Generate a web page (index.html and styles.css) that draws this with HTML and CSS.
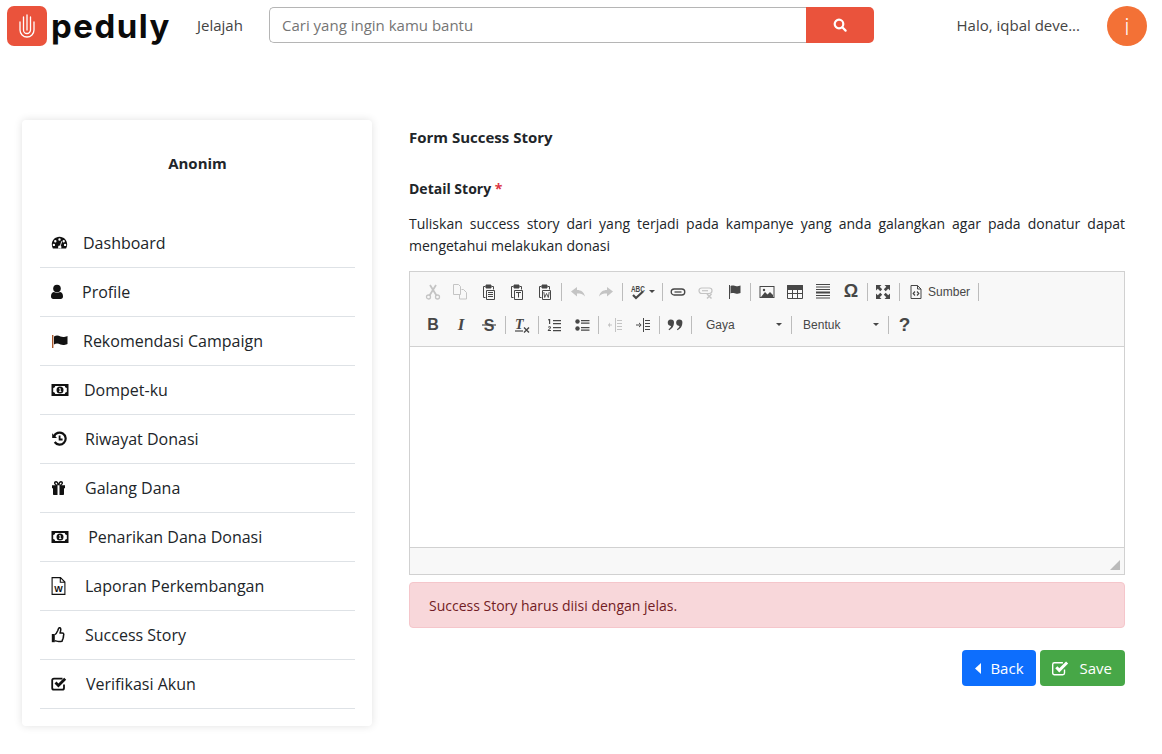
FILE: index.html
```html
<!DOCTYPE html>
<html lang="en">
<head>
    <meta charset="UTF-8">
    <meta name="viewport" content="width=device-width, initial-scale=1.0">
    <title>Form Success Story</title>
    <link rel="stylesheet" href="styles.css">
</head>
<body>
    <header class="topbar">
      <a class="logo-mark" href="#">
        <svg width="24" height="26" viewBox="0 0 24 26" fill="none" stroke="#fff" stroke-width="1.300" stroke-linecap="round">
          <path d="M5 9v8a7 7 0 0 0 14 0V9"/>
          <path d="M8.500 4v13a3.500 3.500 0 0 0 7 0V4"/>
          <path d="M12 2v15"/>
        </svg>
      </a>
      <span class="logo-text">peduly</span>
      <a class="nav-link" href="#">Jelajah</a>
      <form class="search">
        <input class="search-input" type="text" placeholder="Cari yang ingin kamu bantu">
        <button class="search-btn" type="button">
          <svg width="14" height="14" viewBox="0 0 14 14" fill="none" stroke="#fff" stroke-width="2.200" stroke-linecap="round"><circle cx="6" cy="6" r="4.300"/><path d="M9.300 9.300L12.600 12.600"/></svg>
        </button>
      </form>
      <span class="greeting">Halo, iqbal deve...</span>
      <span class="avatar">i</span>
    </header>

    <div class="page">
      <aside class="sidebar">
        <h2 class="sidebar-name">Anonim</h2>
        <ul class="menu">
          <li class="menu-item">
            <svg width="17" height="16" viewBox="0 0 17 16"><path fill="#111" fill-rule="evenodd" d="M8.500 1.800C4 1.800 .8 5.400 .8 9.500c0 1.500.4 2.800 1.100 4h13.200c.7-1.200 1.100-2.500 1.100-4 0-4.100-3.200-7.700-7.700-7.700zM8.500 3.300a1.200 1.200 0 1 1 0 2.400 1.200 1.200 0 0 1 0-2.400zM4.300 5a1.200 1.200 0 1 1 0 2.400 1.200 1.200 0 0 1 0-2.400zM12.700 5a1.200 1.200 0 1 1 0 2.400 1.200 1.200 0 0 1 0-2.400zM2.900 8.700a1.200 1.200 0 1 1 0 2.400 1.200 1.200 0 0 1 0-2.400zM14.100 8.700a1.200 1.200 0 1 1 0 2.400 1.200 1.200 0 0 1 0-2.400zM10.200 6.200l.9.3-1.300 4.300a1.700 1.700 0 1 1-2.700 1 1.700 1.700 0 0 1 2-1.200z"/></svg>
            <span>Dashboard</span>
          </li>
          <li class="menu-item">
            <svg width="16" height="16" viewBox="0 0 16 16"><circle cx="6" cy="4.500" r="3.800" fill="#111"/><path fill="#111" d="M0 12.500c0-2.600.9-4.200 2.800-4.500 1.800 1.100 4.600 1.100 6.400 0 1.900.3 2.800 1.900 2.800 4.500 0 1.500-.9 2.500-2.300 2.500H2.300C.9 15 0 14 0 12.500z"/></svg>
            <span>Profile</span>
          </li>
          <li class="menu-item">
            <svg width="17" height="16" viewBox="0 0 17 16"><rect x="1" y="2" width="1.400" height="13" fill="#a8562a"/><path fill="#111" d="M3 3.500c2.300-1.500 4.500-1 6.500 0 2.300.8 4 .6 7-.5v8c-3 1.100-4.700 1.300-7 .5-2-1-4.200-1.500-6.500 0z"/></svg>
            <span>Rekomendasi Campaign</span>
          </li>
          <li class="menu-item">
            <svg width="18" height="16" viewBox="0 0 18 16"><use href="#ic-money"/></svg>
            <span>Dompet-ku</span>
          </li>
          <li class="menu-item">
            <svg width="19" height="16" viewBox="0 0 19 16"><path fill="none" stroke="#111" stroke-width="2.200" d="M3 5.500A6 6 0 1 1 3.700 11"/><path fill="#111" d="M1.200 2.200v4.800H6z"/><path fill="none" stroke="#111" stroke-width="1.800" d="M8.600 4.500v4h3"/></svg>
            <span>Riwayat Donasi</span>
          </li>
          <li class="menu-item">
            <svg width="19" height="16" viewBox="0 0 19 16"><path fill="#111" fill-rule="evenodd" d="M1 5.200h3.700C3.700 4.700 3 3.800 3 2.900 3 1.700 3.900 1 5 1c1.300 0 2.200 1.100 2.500 2.500C7.800 2.100 8.700 1 10 1c1.100 0 2 .7 2 1.900 0 .9-.7 1.800-1.700 2.300H14v3.100h-1v5.700c0 .6-.4 1-1 1H3c-.6 0-1-.4-1-1V8.300H1zM5 2.500c-.4 0-.6.2-.6.5 0 .6.6 1.200 1.100 1.400h.9C6.200 3.300 5.700 2.500 5 2.500zM10 2.500c-.7 0-1.200.8-1.400 1.900h.9c.5-.2 1.100-.8 1.100-1.400 0-.3-.2-.5-.6-.5zM6.500 5.200V15h2V5.200z"/></svg>
            <span>Galang Dana</span>
          </li>
          <li class="menu-item">
            <svg width="18" height="16" viewBox="0 0 18 16"><use href="#ic-money"/></svg>
            <span>&nbsp;Penarikan Dana Donasi</span>
          </li>
          <li class="menu-item">
            <svg class="file-icon" width="19" height="18" viewBox="0 0 19 18"><path fill="none" stroke="#111" stroke-width="1.100" d="M1.100 .6h8.400l4.400 4.400v12.400H1.100zM9.300 .6v4.600h4.600"/><text x="7.500" y="14.500" class="file-w">W</text></svg>
            <span>Laporan Perkembangan</span>
          </li>
          <li class="menu-item">
            <svg width="19" height="16" viewBox="0 0 19 16"><path fill="#111" d="M.8 7h3v8.200h-3z"/><path fill="none" stroke="#111" stroke-width="1.500" d="M3.800 7.600c1.400-.4 2.200-2.200 3-4.100.4-1.100.6-2.800 1.700-2.800 1.500 0 1.500 2 .9 3.900-.2.500-.3 1-.3 1.400h2.200c1 0 1.500.7 1.500 1.600 0 .8-.4 1.200-.5 1.500.3.500.2 1.300-.2 1.800.1.700-.1 1.400-.6 1.800 0 1.200-.5 1.800-1.500 1.800H7.600c-1.500 0-2.300-.8-3.800-.8"/></svg>
            <span>Success Story</span>
          </li>
          <li class="menu-item">
            <svg width="20" height="16" viewBox="0 0 20 16"><path fill="none" stroke="#111" stroke-width="1.800" d="M13 8.500v3.500c0 1-.7 1.700-1.700 1.700H3c-1 0-1.800-.7-1.800-1.700V4.300C1.200 3.300 2 2.600 3 2.600h8.500"/><path fill="none" stroke="#111" stroke-width="2.800" d="M4.500 6.600l2.900 2.900 6.800-6.800"/></svg>
            <span>Verifikasi Akun</span>
          </li>
        </ul>
      </aside>

      <main class="content">
        <h1 class="form-title">Form Success Story</h1>
        <label class="field-label">Detail Story <span class="required">*</span></label>
        <p class="field-help">Tuliskan success story dari yang terjadi pada kampanye yang anda galangkan agar pada donatur dapat mengetahui melakukan donasi</p>

        <div class="editor">
          <div class="editor-toolbar">
            <div class="tool-row">
              <span class="tool off"><svg viewBox="0 0 16 16" fill="none" stroke="currentColor" stroke-width="1.300"><circle cx="3.500" cy="13" r="2"/><circle cx="12.500" cy="13" r="2"/><path stroke-width="1.800" d="M4.500 11.500L11 1M11.500 11.500L5 1"/></svg></span>
              <span class="tool off"><svg viewBox="0 0 16 16" fill="none" stroke="currentColor"><path d="M.5 .5h5l2 2v8h-7zM8.500 5.500h2l3 3v6.500h-7v-4"/></svg></span>
              <span class="tool"><svg viewBox="0 0 16 16" fill="none" stroke="currentColor"><use href="#ic-clip"/><path d="M7 8.500h5M7 10.500h5M7 12.500h5"/></svg></span>
              <span class="tool"><svg viewBox="0 0 16 16" fill="none" stroke="currentColor"><use href="#ic-clip"/><path d="M7 8.500h5M9.500 8.500v5"/></svg></span>
              <span class="tool"><svg viewBox="0 0 16 16" fill="none" stroke="currentColor"><use href="#ic-clip"/><path stroke-width=".9" d="M6.800 8l.9 5.500 1.800-4 1.800 4 .9-5.500"/></svg></span>
              <i class="tool-sep"></i>
              <span class="tool off"><svg viewBox="0 0 16 16" fill="currentColor"><path d="M1 7.500L7 3v3c4 0 7 2 8 6.500-2-2.500-4.500-3-8-3V12.500z"/></svg></span>
              <span class="tool off"><svg viewBox="0 0 16 16" fill="currentColor"><path d="M15 7.500L9 3v3C5 6 2 8 1 12.500c2-2.500 4.500-3 8-3V12.500z"/></svg></span>
              <i class="tool-sep"></i>
              <span class="tool tool-menu"><svg viewBox="0 0 16 16"><text class="tool-abc" transform="translate(1 8) scale(.8 1.150)">ABC</text><path fill="none" stroke="currentColor" stroke-width="2.200" d="M3 11l3 3 7-6.500"/></svg><b class="caret"></b></span>
              <i class="tool-sep"></i>
              <span class="tool"><svg viewBox="0 0 16 16" fill="none" stroke="currentColor" stroke-width="1.300"><rect x="1.200" y="5" width="13.600" height="6" rx="3"/><path d="M4.500 8h7"/></svg></span>
              <span class="tool off"><svg viewBox="0 0 16 16" fill="none" stroke="currentColor" stroke-width="1.200"><rect x="1" y="4" width="13" height="5.500" rx="2.700"/><path d="M4 6.700h6"/><path stroke-width="1.500" d="M9 10l4.500 4.500M13.500 10L9 14.500"/></svg></span>
              <span class="tool"><svg viewBox="0 0 16 16" fill="currentColor"><rect x="3" y="1" width="1" height="14"/><path d="M4.500 2c3-1 4 .3 6 .3 1.500 0 3-.3 4-.8v7.500c-1 .5-2.500.8-4 .8-2 0-3-1.300-6-.3z"/></svg></span>
              <i class="tool-sep"></i>
              <span class="tool"><svg viewBox="0 0 16 16"><rect x="1" y="2.500" width="14" height="11" fill="none" stroke="currentColor"/><path fill="currentColor" d="M2 13l4-5 2.500 2.500L11 8l3 3v2z"/><circle cx="5" cy="6" r="1.200" fill="currentColor"/></svg></span>
              <span class="tool"><svg viewBox="0 0 16 16" fill="none" stroke="currentColor"><path fill="currentColor" d="M.5 1.500h15v4H.5z"/><path d="M.5 1.500h15v13H.5zM.5 9.500h15M5.500 5.500v9M10.500 5.500v9"/></svg></span>
              <span class="tool"><svg viewBox="0 0 16 16" fill="currentColor"><path d="M1 0h14v1H1zM1 2.500h14v1H1zM1 5h14v1H1zM1 7.500h14v2H1zM1 11h14v1H1zM1 13.500h14v1H1z"/></svg></span>
              <span class="tool"><span class="tool-omega">Ω</span></span>
              <i class="tool-sep"></i>
              <span class="tool"><svg viewBox="0 0 16 16" fill="currentColor"><path d="M1 1h5.500L4.700 2.800 7.200 5.300 5.300 7.200 2.800 4.700 1 6.500zM15 1v5.500l-1.800-1.800-2.500 2.500-1.900-1.900 2.500-2.500L9.500 1zM1 15V9.500l1.800 1.800 2.500-2.500 1.900 1.900-2.500 2.500L6.500 15zM15 15H9.500l1.800-1.800-2.500-2.500 1.900-1.900 2.500 2.500L15 9.500z"/></svg></span>
              <i class="tool-sep"></i>
              <span class="tool tool-text"><svg viewBox="0 0 16 16" fill="none" stroke="currentColor"><path d="M3 1.500h6.500L13 5v9.500H3zM9.500 1.500V5H13"/><path stroke-width="1.200" d="M7 7.500L5.200 9.500 7 11.500M9 7.500l1.800 2L9 11.500"/></svg><span>Sumber</span></span>
              <i class="tool-sep"></i>
            </div>
            <div class="tool-row">
              <span class="tool"><span class="tool-b">B</span></span>
              <span class="tool"><span class="tool-i">I</span></span>
              <span class="tool"><svg viewBox="0 0 16 16"><text x="8" y="13.500" class="tool-strike">S</text><path stroke="currentColor" stroke-width="1.200" d="M1 8h14"/></svg></span>
              <i class="tool-sep"></i>
              <span class="tool"><svg viewBox="0 0 16 16"><text x="1" y="12" class="tool-tx">T</text><path stroke="currentColor" stroke-width="1.200" d="M1 14h8"/><path stroke="currentColor" stroke-width="1.400" d="M10 10.500l5 5M15 10.500l-5 5"/></svg></span>
              <i class="tool-sep"></i>
              <span class="tool"><svg viewBox="0 0 16 16" fill="currentColor"><path d="M7 3h8v1.200H7zM7 6h8v1.200H7zM7 10h8v1.200H7zM7 13h8v1.200H7zM3 2h1.200v5H3zM2 2.500L3 2v1L2 3.500zM2 10c.5-1 3-1 3 .5 0 1-1.500 1.700-2 2.500h2v1H1.800v-.8c.6-1.200 2.200-1.800 2.200-2.700 0-.5-1-.5-1.500.2z"/></svg></span>
              <span class="tool"><svg viewBox="0 0 16 16" fill="currentColor"><circle cx="3.500" cy="4.500" r="2.200"/><circle cx="3.500" cy="11.500" r="2.200"/><path d="M7 3h8.500v1.200H7zM7 5.500h8.500v1.200H7zM7 10h8.500v1.200H7zM7 12.500h8.500v1.200H7z"/></svg></span>
              <i class="tool-sep"></i>
              <span class="tool off"><svg viewBox="0 0 16 16" fill="currentColor"><path d="M8 1h1v14H8zM10 3h5v1h-5zM10 6h5v1h-5zM10 9h5v1h-5zM10 12h5v1h-5zM1 7.500h4v1H1zM1 8L3 5.500v5z"/></svg></span>
              <span class="tool"><svg viewBox="0 0 16 16" fill="currentColor"><path d="M8 1h1v14H8zM10 3h5v1h-5zM10 6h5v1h-5zM10 9h5v1h-5zM10 12h5v1h-5zM1 7.500h4v1H1zM6.500 8L4 5.500v5z"/></svg></span>
              <i class="tool-sep"></i>
              <span class="tool"><svg viewBox="0 0 16 16" fill="currentColor"><path d="M3.800 2.500a3.200 3.200 0 0 1 3.200 3.300c0 3.300-1.800 6-4.800 7.400l-.7-1c1.500-1 2.300-2 2.600-3.300A3.200 3.200 0 0 1 3.800 2.500zM12.200 2.500a3.200 3.200 0 0 1 3.200 3.300c0 3.300-1.800 6-4.800 7.400l-.7-1c1.500-1 2.300-2 2.600-3.300a3.200 3.200 0 0 1-.3-6.400z"/></svg></span>
              <i class="tool-sep"></i>
              <span class="tool-combo combo-gaya"><span>Gaya</span><b class="caret"></b></span>
              <i class="tool-sep"></i>
              <span class="tool-combo combo-bentuk"><span>Bentuk</span><b class="caret"></b></span>
              <i class="tool-sep"></i>
              <span class="tool"><span class="tool-help">?</span></span>
            </div>
          </div>
          <div class="editor-body"></div>
          <div class="editor-bottom">
            <svg width="10" height="10" viewBox="0 0 10 10"><path fill="#bbb" d="M10 0v10H0z"/></svg>
          </div>
        </div>

        <div class="alert">Success Story harus diisi dengan jelas.</div>

        <div class="form-actions">
          <button class="btn btn-back" type="button">
            <svg width="7" height="11" viewBox="0 0 7 11"><path fill="#fff" d="M6 0v11L0 5.500z"/></svg>
            <span>Back</span>
          </button>
          <button class="btn btn-save" type="button">
            <svg width="17" height="15" viewBox="0 0 17 15"><path fill="none" stroke="#fff" stroke-width="1.400" d="M12.500 8.500v3.500c0 1-.7 1.700-1.700 1.700H2.400c-1 0-1.700-.7-1.700-1.700V3.500c0-1 .7-1.700 1.700-1.700h8.500"/><path fill="none" stroke="#fff" stroke-width="3" d="M4.300 6.300l3 3 7.800-7.800"/></svg>
            <span>Save</span>
          </button>
        </div>
      </main>
    </div>

    <svg class="icon-defs" width="0" height="0">
      <symbol id="ic-money" viewBox="0 0 18 16">
        <path fill="#111" fill-rule="evenodd" d="M.5 2h17v12H.5zM2.200 6v4c1 0 1.900.8 2 2h9.600c.1-1.200 1-2 2-2V6c-1 0-1.900-.8-2-2H4.200c-.1 1.200-1 2-2 2z"/>
        <path fill="#111" fill-rule="evenodd" d="M9 4.500a3.500 3.500 0 1 1 0 7 3.500 3.500 0 0 1 0-7zM8 6.200v.8h.6v2.200H8V10h2.400v-.8h-.7V6.200z"/>
      </symbol>
      <symbol id="ic-clip" viewBox="0 0 16 16">
        <path fill="none" stroke="currentColor" d="M4.500 2.500h-2v11h2M10.500 2.500h2v3"/>
        <path fill="currentColor" d="M5 1h5v3H5z"/>
        <path fill="none" stroke="currentColor" d="M5.500 6.500h8v9h-8z"/>
      </symbol>
    </svg>
</body>
</html>
```

FILE: styles.css
```css
* {
  box-sizing: border-box;
}

body {
  margin: 0;
  font-family: 'Open Sans', sans-serif;
  color: #212529;
  background: #fff;
}

.icon-defs {
  position: absolute;
}

.topbar {
  display: flex;
  align-items: center;
  height: 52px;
  padding: 0 15px 0 7px;
}

.logo-mark {
  display: flex;
  flex: none;
  align-items: center;
  justify-content: center;
  width: 40px;
  height: 40px;
  margin-top: -1px;
  background: #ea533c;
  border-radius: 7px;
}

.logo-text {
  flex: none;
  width: 120px;
  margin-left: 4px;
  font-family: 'Inter', sans-serif;
  font-size: 33px;
  font-weight: 700;
  line-height: 40px;
  letter-spacing: 1.500px;
  color: #0b0b0b;
}

.nav-link {
  flex: none;
  width: 46px;
  margin: -3px 0 0 26px;
  font-size: 15px;
  color: #444;
  text-decoration: none;
}

.search {
  display: flex;
  width: 605px;
  height: 36px;
  margin: -2px 0 0 26px;
}

.search-input {
  flex: 1;
  min-width: 0;
  padding: 0 12px;
  border: 1px solid #b5b5b5;
  border-right: none;
  border-radius: 5px 0 0 5px;
  outline: none;
  font-family: inherit;
  font-size: 15px;
}

.search-input::placeholder {
  color: #757575;
}

.search-btn {
  display: flex;
  align-items: center;
  justify-content: center;
  width: 68px;
  padding: 0;
  background: #ea533c;
  border: none;
  border-radius: 0 5px 5px 0;
}

.greeting {
  margin: -3px 0 0 auto;
  font-size: 15px;
  color: #444;
}

.avatar {
  display: flex;
  align-items: center;
  justify-content: center;
  width: 40px;
  height: 40px;
  margin: -1px 0 0 27px;
  background: #f37136;
  border-radius: 50%;
  font-size: 24px;
  font-weight: 300;
  color: #fff;
}

.page {
  display: flex;
  align-items: flex-start;
  gap: 37px;
  padding: 68px 37px 28px 22px;
}

.sidebar {
  flex: none;
  width: 350px;
  height: 606px;
  padding: 0 17px 0 18px;
  background: #fff;
  border-radius: 4px;
  box-shadow: 0 0 8px rgba(0, 0, 0, 0.12);
}

.sidebar-name {
  margin: 33px 0 46px;
  font-size: 15px;
  font-weight: 700;
  line-height: 20px;
  text-align: center;
}

.menu {
  margin: 0;
  padding: 0;
  list-style: none;
}

.menu-item {
  display: flex;
  align-items: center;
  gap: 15px;
  height: 49px;
  padding-left: 11px;
  border-bottom: 1px solid #dee2e6;
  font-size: 16px;
}

.menu-item svg {
  flex: none;
}

.file-w {
  font-family: 'Liberation Sans', sans-serif;
  font-size: 9px;
  font-weight: 700;
  text-anchor: middle;
  fill: #111;
}

.content {
  flex: 1;
  min-width: 0;
}

.form-title {
  margin: 7px 0 0;
  font-size: 15px;
  font-weight: 700;
  line-height: 20px;
}

.field-label {
  display: block;
  margin-top: 32px;
  font-size: 14px;
  font-weight: 700;
  line-height: 20px;
}

.required {
  color: #dc3545;
}

.field-help {
  margin: 14px 0 14px;
  font-size: 14px;
  line-height: 22px;
  text-align: justify;
}

.editor {
  border: 1px solid #d1d1d1;
}

.editor-toolbar {
  height: 75px;
  padding: 3px 0 0 9px;
  background: #f8f8f8;
  border-bottom: 1px solid #d1d1d1;
}

.tool-row {
  display: flex;
  align-items: center;
  height: 33px;
  color: #474747;
}

.tool {
  display: flex;
  flex: none;
  align-items: center;
  justify-content: center;
  width: 28px;
  height: 26px;
}

.tool svg {
  flex: none;
  width: 16px;
  height: 16px;
  overflow: visible;
}

.tool.off {
  color: #c4c4c4;
}

.tool-menu {
  justify-content: flex-start;
  gap: 3px;
  width: 35.500px;
  padding-left: 6px;
}

.tool-text {
  justify-content: flex-start;
  gap: 4px;
  width: 74px;
  padding-left: 6px;
  font-family: 'Liberation Sans', sans-serif;
  font-size: 12px;
}

.tool-sep {
  flex: none;
  width: 1px;
  height: 18px;
  margin: 0 1.600px 0 2px;
  background: #bcbcbc;
}

.caret {
  width: 0;
  height: 0;
  border-top: 3px solid #474747;
  border-left: 3px solid transparent;
  border-right: 3px solid transparent;
}

.tool-abc {
  font-family: 'Liberation Sans', sans-serif;
  font-size: 8px;
  font-weight: 700;
  fill: #474747;
}

.tool-tx {
  font-family: 'Liberation Serif', serif;
  font-size: 14px;
  font-style: italic;
  font-weight: 700;
  fill: #474747;
}

.tool-strike {
  font-family: 'Liberation Sans', sans-serif;
  font-size: 16px;
  font-weight: 700;
  text-anchor: middle;
  fill: #474747;
}

.tool-omega {
  font-family: 'Liberation Sans', sans-serif;
  font-size: 18px;
  font-weight: 700;
}

.tool-b {
  font-family: 'Liberation Sans', sans-serif;
  font-size: 16px;
  font-weight: 700;
}

.tool-i {
  font-family: 'Liberation Serif', serif;
  font-size: 17px;
  font-style: italic;
  font-weight: 700;
}

.tool-help {
  font-family: 'Liberation Sans', sans-serif;
  font-size: 19px;
  font-weight: 700;
}

.tool-combo {
  display: flex;
  flex: none;
  align-items: center;
  justify-content: space-between;
  padding-right: 7px;
  font-family: 'Liberation Sans', sans-serif;
  font-size: 12px;
}

.combo-gaya {
  width: 95px;
  padding-left: 12px;
}

.combo-bentuk {
  width: 92.500px;
  padding-left: 9.500px;
}

.editor-body {
  height: 200px;
  background: #fff;
}

.editor-bottom {
  display: flex;
  align-items: flex-end;
  justify-content: flex-end;
  height: 27px;
  padding: 0 4px 4px 0;
  background: #f8f8f8;
  border-top: 1px solid #d1d1d1;
}

.alert {
  height: 46px;
  margin-top: 7px;
  padding: 0 19px;
  background: #f8d7da;
  border: 1px solid #f5c6cb;
  border-radius: 4px;
  font-size: 14px;
  line-height: 46px;
  color: #721c24;
}

.form-actions {
  display: flex;
  justify-content: flex-end;
  gap: 4px;
  margin-top: 22px;
}

.btn {
  display: flex;
  align-items: center;
  height: 36px;
  padding: 0 12px;
  border: none;
  border-radius: 4px;
  font-family: inherit;
  font-size: 15px;
  color: #fff;
}

.btn-back {
  gap: 8px;
  padding: 0 12px 0 13px;
  background: #0d6efd;
}

.btn-save {
  gap: 11px;
  padding-right: 13px;
  background: #47a747;
}
```
